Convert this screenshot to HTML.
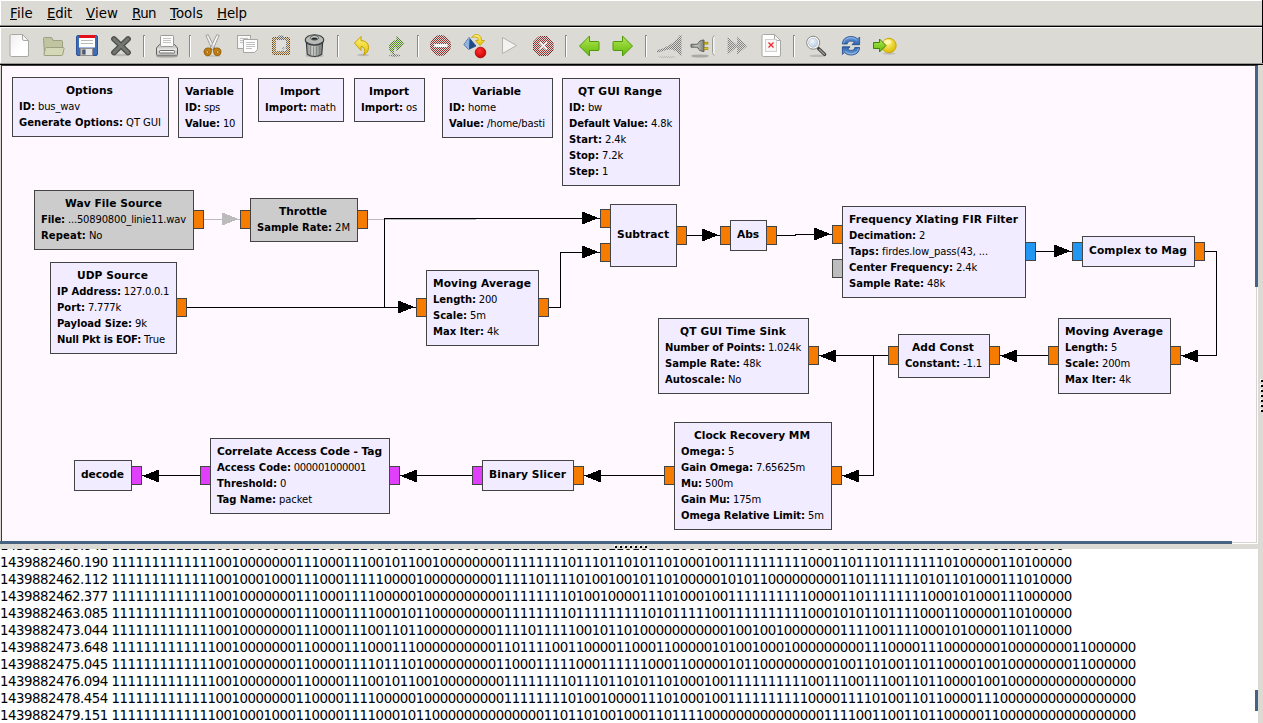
<!DOCTYPE html>
<html><head><meta charset="utf-8"><title>bus_wav.grc - GNU Radio Companion</title>
<style>
html,body{margin:0;padding:0}
body{width:1263px;height:723px;overflow:hidden;background:#dcdad5;position:relative;font-family:"DejaVu Sans","Liberation Sans",sans-serif;color:#000}
.abs{position:absolute}
#menubar{position:absolute;left:0;top:0;width:1263px;height:25px;background:#dcdad5;border-top:1px solid #fff;box-sizing:border-box}
#menubar .mi{position:absolute;top:5px;font-size:13.333px;line-height:16px;white-space:nowrap}
#menubar u{text-decoration:underline;text-underline-offset:1px}
#canvas{position:absolute;left:2px;top:66px;width:1253px;height:475px;background:#FFF9FF;overflow:hidden}
#cv{position:absolute;left:-2px;top:-66px;width:1263px;height:723px}
.blk{position:absolute;background:#F1ECFF;border:1px solid #444;white-space:nowrap}
.blk.dis{background:#CCCCCC}
.blk .t{position:absolute;font-size:10.667px;line-height:13px;height:13px;white-space:pre}
.blk .p{position:absolute;left:6px;font-size:10px;line-height:13px;height:13px;white-space:pre}
.port{position:absolute;width:9px;height:17px;border:1px solid #444}
#console{position:absolute;left:0;top:549px;width:1258px;height:174px;background:#fff;overflow:hidden}
.ln{position:absolute;left:0px;font-size:13.333px;line-height:17px;height:17px;white-space:pre;letter-spacing:-0.4775px}
</style></head><body>
<div id="menubar">
<div class="mi" style="left:10px"><span id="s1" style="letter-spacing:0.172px;"><u>F</u>ile</span></div><div class="mi" style="left:47px"><span id="s2" style="letter-spacing:-0.203px;"><u>E</u>dit</span></div><div class="mi" style="left:86px"><span id="s3" style="letter-spacing:0.090px;"><u>V</u>iew</span></div><div class="mi" style="left:132px"><span id="s4" style="letter-spacing:-0.526px;"><u>R</u>un</span></div><div class="mi" style="left:170px"><span id="s5" style="letter-spacing:0.028px;"><u>T</u>ools</span></div><div class="mi" style="left:217px"><span id="s6" style="letter-spacing:-0.102px;"><u>H</u>elp</span></div>
</div>
<div class="abs" style="left:0;top:25px;width:1263px;height:1px;background:#8b8985"></div>
<div class="abs" style="left:0;top:26px;width:1263px;height:1px;background:#000"></div>
<div class="abs" style="left:0;top:27px;width:1263px;height:1px;background:#fff"></div>
<div class="abs" style="left:0;top:28px;width:1px;height:36px;background:#fff"></div>
<div class="abs" style="left:0;top:1px;width:1px;height:24px;background:#fff"></div>
<div class="abs" style="left:1262px;top:0;width:1px;height:65px;background:#000"></div>
<div class="abs" style="left:0;top:63px;width:1263px;height:1px;background:#9d9b97"></div>
<div class="abs" style="left:0;top:64px;width:1263px;height:1px;background:#000"></div>
<div class="abs" style="left:1px;top:65px;width:1257px;height:1px;background:#3a3a3a"></div>
<div class="abs" style="left:1px;top:65px;width:1px;height:476px;background:#3a3a3a"></div>
<svg class="abs" style="left:0;top:28px" width="1263" height="36" viewBox="0 28 1263 36">
<defs>
<linearGradient id="gpage" x1="0" y1="0" x2="1" y2="1"><stop offset="0" stop-color="#eeeeee"/><stop offset="0.6" stop-color="#ffffff"/></linearGradient>
<linearGradient id="ggreen" x1="0" y1="0" x2="0" y2="1"><stop offset="0" stop-color="#b4e85c"/><stop offset="0.5" stop-color="#8ad02c"/><stop offset="1" stop-color="#66b814"/></linearGradient>
<linearGradient id="gyel" x1="0" y1="0" x2="0" y2="1"><stop offset="0" stop-color="#fff27a"/><stop offset="1" stop-color="#e3c200"/></linearGradient>
<linearGradient id="gblue" x1="0" y1="0" x2="0" y2="1"><stop offset="0" stop-color="#6ea0dc"/><stop offset="1" stop-color="#2f62ae"/></linearGradient>
<linearGradient id="gcan" x1="0" y1="0" x2="1" y2="0"><stop offset="0" stop-color="#8d8f8b"/><stop offset="0.4" stop-color="#c9cbc7"/><stop offset="1" stop-color="#7a7c78"/></linearGradient>
<radialGradient id="gball" cx="0.4" cy="0.3" r="0.7"><stop offset="0" stop-color="#fff68a"/><stop offset="1" stop-color="#dcbc00"/></radialGradient>
<radialGradient id="gred" cx="0.4" cy="0.35" r="0.7"><stop offset="0" stop-color="#ff3030"/><stop offset="1" stop-color="#cc0000"/></radialGradient>
<radialGradient id="glens" cx="0.4" cy="0.35" r="0.7"><stop offset="0" stop-color="#f4f8fc"/><stop offset="1" stop-color="#b4c8e0"/></radialGradient>
<pattern id="stip" width="2" height="2" patternUnits="userSpaceOnUse"><rect x="0" y="0" width="1" height="1" fill="#fff"/><rect x="1" y="1" width="1" height="1" fill="#fff"/></pattern>
<mask id="mstip" maskUnits="userSpaceOnUse" x="0" y="28" width="1263" height="36"><rect x="0" y="28" width="1263" height="36" fill="url(#stip)"/></mask>
</defs>
<!-- separators -->
<g shape-rendering="crispEdges">
<rect x="143" y="35" width="1" height="22" fill="#8e8a83"/><rect x="144" y="35" width="1" height="1" fill="#8e8a83"/><rect x="144" y="36" width="1" height="21" fill="#fff"/>
<rect x="189" y="35" width="1" height="22" fill="#8e8a83"/><rect x="190" y="35" width="1" height="1" fill="#8e8a83"/><rect x="190" y="36" width="1" height="21" fill="#fff"/>
<rect x="337" y="35" width="1" height="22" fill="#8e8a83"/><rect x="338" y="35" width="1" height="1" fill="#8e8a83"/><rect x="338" y="36" width="1" height="21" fill="#fff"/>
<rect x="417" y="35" width="1" height="22" fill="#8e8a83"/><rect x="418" y="35" width="1" height="1" fill="#8e8a83"/><rect x="418" y="36" width="1" height="21" fill="#fff"/>
<rect x="565" y="35" width="1" height="22" fill="#8e8a83"/><rect x="566" y="35" width="1" height="1" fill="#8e8a83"/><rect x="566" y="36" width="1" height="21" fill="#fff"/>
<rect x="645" y="35" width="1" height="22" fill="#8e8a83"/><rect x="646" y="35" width="1" height="1" fill="#8e8a83"/><rect x="646" y="36" width="1" height="21" fill="#fff"/>
<rect x="793" y="35" width="1" height="22" fill="#8e8a83"/><rect x="794" y="35" width="1" height="1" fill="#8e8a83"/><rect x="794" y="36" width="1" height="21" fill="#fff"/>
</g>
<!-- new -->
<path d="M11.5 34.5 h11 l6 6 v14.5 q0 1.5 -1.5 1.5 h-15.5 q-1.5 0 -1.5 -1.5 v-19 q0 -1.5 1.5 -1.5z" fill="url(#gpage)" stroke="#a8a8a4"/>
<path d="M22.5 34.5 v4.5 q0 1.5 1.5 1.5 h4.5z" fill="#f4f4f4" stroke="#a8a8a4" stroke-linejoin="round"/>
<!-- open -->
<path d="M43.500 38.500 q0 -1 1 -1 h6.500 q1 0 1.300 1 l0.700 2 h8.500 q1 0 1 1 v13 h-18z" fill="#c1c4a0" stroke="#9c9f80"/>
<path d="M46.800 47.500 h16.500 q1 0 0.800 1 l-1.400 6 q-0.200 1 -1.200 1 h-16.800 q-1 0 -0.800 -1 l1.400 -6 q0.300 -1 1.500 -1z" fill="#d5d8b6" stroke="#9c9f80"/>
<!-- save -->
<rect x="76.500" y="35.500" width="21" height="20" rx="1.500" fill="#3e6cb6" stroke="#2c5496"/>
<rect x="79" y="35" width="16" height="12.500" fill="#fff"/>
<rect x="79" y="35" width="16" height="3" fill="#e3101a"/>
<rect x="81" y="40" width="12" height="1" fill="#b9b9b9"/><rect x="81" y="43" width="12" height="1" fill="#b9b9b9"/>
<rect x="80.500" y="48.500" width="12" height="7" fill="#e4e4e4" stroke="#8e8e8e"/>
<rect x="81" y="49" width="5" height="6" fill="#c4c4c4"/>
<rect x="82.800" y="50" width="2.200" height="4" fill="#3e6cb6" stroke="#3a3a3a" stroke-width="0.700"/>
<!-- close X -->
<ellipse cx="121" cy="55" rx="8" ry="1.300" fill="#000" opacity="0.150"/>
<g stroke-linecap="round" fill="none">
<path d="M114 39 L128 52.500 M128 39 L114 52.500" stroke="#50524e" stroke-width="5.800"/>
<path d="M114 39 L128 52.500 M128 39 L114 52.500" stroke="#747671" stroke-width="3"/>
</g>
<!-- print -->
<ellipse cx="167" cy="56.500" rx="11" ry="1.300" fill="#000" opacity="0.180"/>
<path d="M159.500 44.500 h15 l3 3.500 v6.500 q0 1.200 -1.200 1.200 h-18.600 q-1.200 0 -1.200 -1.200 v-6.500z" fill="#cfcfcd" stroke="#5f615d"/>
<path d="M157 48.500 h20 v2 h-20z" fill="#e6e6e4"/>
<rect x="160.500" y="35.500" width="13" height="11" rx="0.800" fill="#fbfbfb" stroke="#9a9a98"/>
<rect x="163" y="38" width="8" height="1" fill="#c4c4c4"/><rect x="163" y="40" width="8" height="1" fill="#c4c4c4"/><rect x="163" y="42" width="8" height="1" fill="#c4c4c4"/>
<rect x="159.500" y="50.500" width="15" height="2.500" rx="0.800" fill="#fafafa" stroke="#5f615d" stroke-width="0.900"/>
<path d="M157 55 h20" stroke="#9b9d99" stroke-width="0.800"/>
<!-- cut -->
<ellipse cx="213" cy="56" rx="8" ry="1" fill="#000" opacity="0.100"/>
<path d="M205.900 35.500 L208.200 34.700 L214.800 48.300 L212.200 49.800 Z" fill="#eeefec" stroke="#8f918d" stroke-width="0.800"/>
<path d="M219.100 35.500 L216.800 34.700 L210.200 48.300 L212.800 49.800 Z" fill="#f6f7f5" stroke="#8f918d" stroke-width="0.800"/>
<circle cx="212.500" cy="46.700" r="0.900" fill="#fff" stroke="#888a85" stroke-width="0.500"/>
<g fill="#c47f12" stroke="#8f5902" stroke-width="0.900">
<path d="M211.300 48.600 q-2.800 -1.200 -5.300 -0.300 q-2.200 1 -2 3.700 q0.300 3.500 3.400 3.700 q3.300 0 3.800 -3 z"/>
<path d="M213.700 48.600 q2.800 -1.200 5.300 -0.300 q2.200 1 2 3.700 q-0.300 3.500 -3.400 3.700 q-3.300 0 -3.800 -3 z"/>
</g>
<ellipse cx="207.300" cy="52" rx="1.200" ry="1.700" fill="#e3b76a" stroke="#8f5902" stroke-width="0.600" transform="rotate(-15 207.3 52)"/>
<ellipse cx="217.700" cy="52" rx="1.200" ry="1.700" fill="#e3b76a" stroke="#8f5902" stroke-width="0.600" transform="rotate(15 217.7 52)"/>
<!-- copy -->
<rect x="237.500" y="35.500" width="13" height="13" fill="#f7f7f7" stroke="#a6a6a3"/>
<rect x="240" y="38" width="8" height="1" fill="#c0c0c0"/><rect x="240" y="40" width="8" height="1" fill="#c0c0c0"/><rect x="240" y="42" width="4" height="1" fill="#c0c0c0"/>
<path d="M243.500 39.500 h14 v10 l-3 3 h-11z" fill="#fff" stroke="#a6a6a3"/>
<rect x="246" y="42" width="9" height="1" fill="#c0c0c0"/><rect x="246" y="44" width="9" height="1" fill="#c0c0c0"/><rect x="246" y="46" width="9" height="1" fill="#c0c0c0"/><rect x="246" y="48" width="6" height="1" fill="#c0c0c0"/>
<!-- paste (insensitive) -->
<g mask="url(#mstip)">
<rect x="272.500" y="37.500" width="17" height="17" rx="1" fill="#9a6a26" stroke="#5e4117"/>
<rect x="275.500" y="39.500" width="11" height="12" fill="#e2e2e2" stroke="#6f6f6f"/>
<path d="M277 38.500 l2 -3 h4 l2 3 v1.500 h-8z" fill="#666"/>
<path d="M282 51 v-4 h4z" fill="#999"/>
</g>
<!-- delete (trash) -->
<ellipse cx="314.500" cy="55.800" rx="9.500" ry="1.600" fill="#000" opacity="0.150"/>
<path d="M306.300 42 l0.900 12.200 q3.500 2.300 7.300 2.300 q3.800 0 7.300 -2.300 l0.900 -12.200z" fill="url(#gcan)" stroke="#353b3c" stroke-width="1.100"/>
<path d="M310.500 46 v9.500 M313.500 46.500 v10 M316.500 46.500 v10 M319.500 46 v9" stroke="#767874" stroke-width="0.900" opacity="0.800"/>
<ellipse cx="314.500" cy="40" rx="9.300" ry="5.300" fill="#b9bbb7" stroke="#353b3c" stroke-width="1.100"/>
<path d="M305.500 41.500 q9 6.500 18 0" fill="none" stroke="#353b3c" stroke-width="0.800"/>
<ellipse cx="314.500" cy="37.800" rx="4" ry="2.300" fill="#d4d6d2" stroke="#353b3c" stroke-width="0.800"/>
<ellipse cx="314.500" cy="38.600" rx="2.800" ry="1.200" fill="#23272a"/>
<!-- undo -->
<ellipse cx="363" cy="55" rx="6" ry="1.200" fill="#000" opacity="0.150"/>
<path d="M354.500 43 l6.500 -6.500 v4 q7.500 0.500 7.500 7 q0 5 -5 7.500 q2 -3.500 1 -6 q-1 -2.500 -3.500 -2.500 v4z" fill="url(#gyel)" stroke="#c4a000" stroke-linejoin="round"/>
<!-- redo insensitive -->
<g mask="url(#mstip)">
<path d="M403.500 43 l-6.500 -6.500 v4 q-7.500 0.500 -7.500 7 q0 5 5 7.500 q-2 -3.500 -1 -6 q1 -2.500 3.500 -2.500 v4z" fill="#4f8f1b" stroke="#3b7010" stroke-linejoin="round"/>
<ellipse cx="395" cy="55.500" rx="6" ry="1.200" fill="#777"/>
</g>
<!-- errors (insensitive) -->
<g mask="url(#mstip)">
<circle cx="440.500" cy="45.500" r="10" fill="#9a3232" stroke="#6e2020"/>
<rect x="434" y="44" width="13.500" height="3" rx="1" fill="#fff"/>
</g>
<rect x="434" y="44" width="13.500" height="3" rx="1" fill="#fff" opacity="0.550"/>
<!-- generate (convert) -->
<path d="M469 37.500 l-5 7 l4.500 5 l7.500 -3.500z" fill="#204a87" stroke="#204a87" stroke-width="0.800" stroke-linejoin="round"/>
<path d="M469 37.500 l-0.500 12" stroke="#c8dcf4" stroke-width="0.800" fill="none"/>
<path d="M464 44.500 l4.500 5 l0.500 -12z" fill="#8fb5e3"/>
<path d="M471.500 37.500 q4 -5 8 -2 q2.500 2 2 5 h3 l-4.500 5 l-4.500 -5 h2.800 q0.500 -3.500 -3 -3.500 q-2 0 -3.800 0.500z" fill="url(#gyel)" stroke="#c4a000" stroke-width="0.800" stroke-linejoin="round"/>
<circle cx="480.500" cy="52.500" r="5.300" fill="url(#gred)" stroke="#a40000" stroke-width="0.800"/>
<!-- play (insensitive look) -->
<path d="M502.500 37.500 v16 l14 -8z" fill="#f3f3f1" stroke="#b3b3ae" stroke-linejoin="round"/>
<!-- stop (insensitive) -->
<g mask="url(#mstip)">
<path d="M539 36.500 h8.500 l5.500 5.500 v8 l-5.500 5.500 h-8.500 l-5.500 -5.500 v-8z" fill="#9a3232" stroke="#6e2020"/>
<path d="M539.500 42 l7.500 7.500 M547 42 l-7.500 7.500" stroke="#fff" stroke-width="2"/>
</g>
<path d="M539.500 42 l7.500 7.500 M547 42 l-7.500 7.500" stroke="#fff" stroke-width="1.400" opacity="0.250"/>
<!-- back -->
<path d="M579.500 46 l10 -10 v5.500 h8.500 q1 0 1 1 v7 q0 1 -1 1 h-8.500 v5.500z" fill="url(#ggreen)" stroke="#4e9a06" stroke-linejoin="round"/>
<!-- forward -->
<path d="M632.500 46 l-10 -10 v5.500 h-8.500 q-1 0 -1 1 v7 q0 1 1 1 h8.500 v5.500z" fill="url(#ggreen)" stroke="#4e9a06" stroke-linejoin="round"/>
<!-- disconnect (insensitive) -->
<g mask="url(#mstip)">
<path d="M657 50 C661 49 665 47.500 668 46 C672 44 677 39 680 35 L681.500 35 L681.500 55.500 L680 55.500 C678 52 674 49.500 670 49.500 C665 50 661 52 657 52.500 Z" fill="#7e7e7e"/>
<ellipse cx="667" cy="57" rx="9" ry="1" fill="#b8b8b8"/>
</g>
<!-- connect (plug) -->
<ellipse cx="700" cy="56" rx="9" ry="1.600" fill="#000" opacity="0.220"/>
<path d="M691 44.300 h6.500 q1.500 -4.300 6.500 -4.300 v11.500 q-5 0 -6.500 -4.300 h-6.500z" fill="url(#gcan)" stroke="#555753" stroke-width="0.900"/>
<rect x="704.500" y="42.200" width="3.500" height="1.900" fill="#e0c000" stroke="#8f7a00" stroke-width="0.600"/>
<rect x="704.500" y="47.700" width="3.500" height="1.900" fill="#e0c000" stroke="#8f7a00" stroke-width="0.600"/>
<path d="M714.500 35.500 q-2.500 1 -2.500 3 v14 q0 2 2.500 3z" fill="#f4f4f2"/>
<path d="M714.500 35.500 q-2 1 -2 3 v14 q0 2 2 3" fill="none" stroke="#8e8e8a" stroke-width="0.900"/>
<!-- fast-forward (insensitive) -->
<g mask="url(#mstip)">
<path d="M728 37.500 v16.500 l9.500 -8.200z M737.500 37.500 v16.500 l9.500 -8.200z" fill="#888" stroke="#777" stroke-width="0.600"/>
</g>
<!-- missing image -->
<path d="M763.500 34.500 h11 l6 6 v14.500 q0 1.500 -1.500 1.500 h-15.500 q-1.500 0 -1.500 -1.500 v-19 q0 -1.500 1.500 -1.500z" fill="#fff" stroke="#a8a8a4"/>
<path d="M774.500 34.500 v4.500 q0 1.500 1.500 1.500 h4.500z" fill="#f4f4f4" stroke="#a8a8a4" stroke-linejoin="round"/>
<rect x="765.500" y="39.500" width="11" height="12" fill="#f6f6f6" stroke="#d0d0cc"/>
<path d="M768.500 42.500 l5 5 M773.500 42.500 l-5 5" stroke="#ef2929" stroke-width="1.300"/>
<!-- find (magnifier) -->
<ellipse cx="817" cy="55.800" rx="8" ry="1.300" fill="#000" opacity="0.140"/>
<path d="M818.600 48.600 l6 5.800" stroke="#3c3e3a" stroke-width="3.400" stroke-linecap="round"/>
<path d="M819.200 49.300 l5.200 5" stroke="#a3a5a1" stroke-width="1.200" stroke-linecap="round"/>
<circle cx="813.200" cy="42.700" r="6.500" fill="#fff" stroke="#858783" stroke-width="1"/>
<circle cx="813.200" cy="42.700" r="4.700" fill="url(#glens)" stroke="#b9bdc2" stroke-width="0.600"/>
<!-- refresh -->
<g>
<path d="M842.400 44 C842.600 39.300 846 36.500 851 36.500 C853.800 36.500 856 37.400 857.600 39 L859.600 37 L859.600 44.700 L851.900 44.700 L854.300 42.300 C853.400 41.500 852.300 41.100 851 41.100 C848.800 41.100 847.500 42.300 847.200 44 Z" fill="url(#gblue)" stroke="#204a87" stroke-width="0.800" stroke-linejoin="round"/>
<path d="M843.600 43.200 C844.200 39.800 847 37.700 851 37.700 C853.300 37.700 855.200 38.600 856.800 40.200" stroke="#a9c8ee" stroke-width="0.900" fill="none" opacity="0.800"/>
</g>
<g transform="rotate(180 851 45.750)">
<path d="M842.400 44 C842.600 39.300 846 36.500 851 36.500 C853.800 36.500 856 37.400 857.600 39 L859.600 37 L859.600 44.700 L851.900 44.700 L854.300 42.300 C853.400 41.500 852.300 41.100 851 41.100 C848.800 41.100 847.500 42.300 847.200 44 Z" fill="url(#gblue)" stroke="#204a87" stroke-width="0.800" stroke-linejoin="round"/>
<path d="M843.600 43.200 C844.200 39.800 847 37.700 851 37.700 C853.300 37.700 855.200 38.600 856.800 40.200" stroke="#a9c8ee" stroke-width="0.900" fill="none" opacity="0.800"/>
</g>
<!-- jump to -->
<ellipse cx="889" cy="53.500" rx="6.500" ry="1.200" fill="#000" opacity="0.140"/>
<circle cx="889" cy="45.500" r="7.200" fill="url(#gball)" stroke="#c4a000" stroke-width="0.900"/>
<ellipse cx="887.500" cy="42" rx="3.800" ry="2.300" fill="#fffbc0" opacity="0.700"/>
<path d="M873.500 42.500 h6 v-3.500 l6.500 6.500 l-6.500 6.500 v-3.500 h-6z" fill="url(#ggreen)" stroke="#3f8204" stroke-linejoin="round"/>

</svg>
<div id="canvas"><div id="cv">
<svg class="abs" style="left:0;top:0" width="1263" height="723" shape-rendering="crispEdges">
<polyline points="204,219.5 240,219.5" fill="none" stroke="#bbb" stroke-width="1"/>
<polygon points="222,213 223.5,213 238.5,219 223.5,225 222,225" fill="#bbb"/>
<polyline points="368,219.5 476,219.5" fill="none" stroke="#bbb" stroke-width="1"/>
<polyline points="187,307.5 416,307.5" fill="none" stroke="#000" stroke-width="1"/>
<polygon points="398,301 399.5,301 414.5,307 399.5,313 398,313" fill="#000"/>
<polyline points="384.5,307.5 384.5,218.5 600,218.5" fill="none" stroke="#000" stroke-width="1"/>
<polygon points="582,212 583.5,212 598.5,218 583.5,224 582,224" fill="#000"/>
<polyline points="549,307.5 560.5,307.5 560.5,252.5 600,252.5" fill="none" stroke="#000" stroke-width="1"/>
<polygon points="582,246 583.5,246 598.5,252 583.5,258 582,258" fill="#000"/>
<polyline points="687,235.5 720,235.5" fill="none" stroke="#000" stroke-width="1"/>
<polygon points="702,229 703.5,229 718.5,235 703.5,241 702,241" fill="#000"/>
<polyline points="777,235.5 795.5,235.5 795.5,234.5 832,234.5" fill="none" stroke="#000" stroke-width="1"/>
<polygon points="814,228 815.5,228 830.5,234 815.5,240 814,240" fill="#000"/>
<polyline points="1036,251.5 1072,251.5" fill="none" stroke="#000" stroke-width="1"/>
<polygon points="1054,245 1055.5,245 1070.5,251 1055.5,257 1054,257" fill="#000"/>
<polyline points="1205,251.5 1216.5,251.5 1216.5,355.5 1181,355.5" fill="none" stroke="#000" stroke-width="1"/>
<polygon points="1198,350 1196.5,350 1181.5,356 1196.5,362 1198,362" fill="#000"/>
<polyline points="1048,355.5 1000,355.5" fill="none" stroke="#000" stroke-width="1"/>
<polygon points="1017,350 1015.5,350 1000.5,356 1015.5,362 1017,362" fill="#000"/>
<polyline points="888,355.5 819,355.5" fill="none" stroke="#000" stroke-width="1"/>
<polygon points="836,350 834.5,350 819.5,356 834.5,362 836,362" fill="#000"/>
<polyline points="873.5,355.5 873.5,475.5 842,475.5" fill="none" stroke="#000" stroke-width="1"/>
<polygon points="859,470 857.5,470 842.5,476 857.5,482 859,482" fill="#000"/>
<polyline points="664,475.5 584,475.5" fill="none" stroke="#000" stroke-width="1"/>
<polygon points="601,470 599.5,470 584.5,476 599.5,482 601,482" fill="#000"/>
<polyline points="472,475.5 400,475.5" fill="none" stroke="#000" stroke-width="1"/>
<polygon points="417,470 415.5,470 400.5,476 415.5,482 417,482" fill="#000"/>
<polyline points="200,475.5 142,475.5" fill="none" stroke="#000" stroke-width="1"/>
<polygon points="159,470 157.5,470 142.5,476 157.5,482 159,482" fill="#000"/>
</svg>
<div class="blk" style="left:12px;top:77px;width:155px;height:58px"><div class="t" style="top:6px;left:53px"><span id="s7" style="font-weight:bold;letter-spacing:0.045px;">Options</span></div><div class="p" style="top:22px"><span id="s8" style="font-weight:bold;letter-spacing:-0.010px;">ID:</span><span id="s9" style="letter-spacing:-0.164px;"> bus_wav</span></div><div class="p" style="top:38px"><span id="s10" style="font-weight:bold;letter-spacing:0.033px;">Generate Options:</span><span id="s11" style="letter-spacing:-0.051px;"> QT GUI</span></div></div><div class="blk" style="left:178px;top:78px;width:63px;height:58px"><div class="t" style="top:6px;left:6px"><span id="s12" style="font-weight:bold;letter-spacing:-0.059px;">Variable</span></div><div class="p" style="top:22px"><span id="s13" style="font-weight:bold;letter-spacing:-0.010px;">ID:</span><span id="s14" style="letter-spacing:-0.238px;"> sps</span></div><div class="p" style="top:38px"><span id="s15" style="font-weight:bold;letter-spacing:-0.047px;">Value:</span><span id="s16" style="letter-spacing:-0.302px;"> 10</span></div></div><div class="blk" style="left:258px;top:78px;width:84px;height:42px"><div class="t" style="top:6px;left:21px"><span id="s17" style="font-weight:bold;letter-spacing:-0.062px;">Import</span></div><div class="p" style="top:22px"><span id="s18" style="font-weight:bold;letter-spacing:0.016px;">Import:</span><span id="s19" style="letter-spacing:-0.062px;"> math</span></div></div><div class="blk" style="left:354px;top:78px;width:69px;height:42px"><div class="t" style="top:6px;left:14px"><span id="s20" style="font-weight:bold;letter-spacing:-0.062px;">Import</span></div><div class="p" style="top:22px"><span id="s21" style="font-weight:bold;letter-spacing:0.016px;">Import:</span><span id="s22" style="letter-spacing:-0.172px;"> os</span></div></div><div class="blk" style="left:442px;top:78px;width:109px;height:58px"><div class="t" style="top:6px;left:29px"><span id="s23" style="font-weight:bold;letter-spacing:-0.059px;">Variable</span></div><div class="p" style="top:22px"><span id="s24" style="font-weight:bold;letter-spacing:-0.010px;">ID:</span><span id="s25" style="letter-spacing:-0.106px;"> home</span></div><div class="p" style="top:38px"><span id="s26" style="font-weight:bold;letter-spacing:-0.047px;">Value:</span><span id="s27" style="letter-spacing:-0.138px;"> /home/basti</span></div></div><div class="blk" style="left:562px;top:78px;width:116px;height:106px"><div class="t" style="top:6px;left:15px"><span id="s28" style="font-weight:bold;letter-spacing:0.087px;">QT GUI Range</span></div><div class="p" style="top:22px"><span id="s29" style="font-weight:bold;letter-spacing:-0.010px;">ID:</span><span id="s30" style="letter-spacing:-0.240px;"> bw</span></div><div class="p" style="top:38px"><span id="s31" style="font-weight:bold;letter-spacing:-0.090px;">Default Value:</span><span id="s32" style="letter-spacing:-0.175px;"> 4.8k</span></div><div class="p" style="top:54px"><span id="s33" style="font-weight:bold;letter-spacing:0.091px;">Start:</span><span id="s34" style="letter-spacing:-0.175px;"> 2.4k</span></div><div class="p" style="top:70px"><span id="s35" style="font-weight:bold;letter-spacing:-0.003px;">Stop:</span><span id="s36" style="letter-spacing:-0.175px;"> 7.2k</span></div><div class="p" style="top:86px"><span id="s37" style="font-weight:bold;letter-spacing:0.016px;">Step:</span><span id="s38" style="letter-spacing:-0.273px;"> 1</span></div></div><div class="blk dis" style="left:34px;top:190px;width:158px;height:58px"><div class="t" style="top:6px;left:30px"><span id="s39" style="font-weight:bold;letter-spacing:0.058px;">Wav File Source</span></div><div class="p" style="top:22px"><span id="s40" style="font-weight:bold;letter-spacing:-0.094px;">File:</span><span id="s41" style="letter-spacing:-0.191px;"> ...50890800_linie11.wav</span></div><div class="p" style="top:38px"><span id="s42" style="font-weight:bold;letter-spacing:0.150px;">Repeat:</span><span id="s43" style="letter-spacing:-0.260px;"> No</span></div></div><div class="blk dis" style="left:250px;top:198px;width:106px;height:42px"><div class="t" style="top:6px;left:28px"><span id="s44" style="font-weight:bold;letter-spacing:-0.062px;">Throttle</span></div><div class="p" style="top:22px"><span id="s45" style="font-weight:bold;letter-spacing:-0.020px;">Sample Rate:</span><span id="s46" style="letter-spacing:-0.057px;"> 2M</span></div></div><div class="blk" style="left:50px;top:262px;width:125px;height:90px"><div class="t" style="top:6px;left:26px"><span id="s47" style="font-weight:bold;letter-spacing:0.059px;">UDP Source</span></div><div class="p" style="top:22px"><span id="s48" style="font-weight:bold;letter-spacing:-0.020px;">IP Address:</span><span id="s49" style="letter-spacing:-0.289px;"> 127.0.0.1</span></div><div class="p" style="top:38px"><span id="s50" style="font-weight:bold;letter-spacing:0.016px;">Port:</span><span id="s51" style="letter-spacing:-0.230px;"> 7.777k</span></div><div class="p" style="top:54px"><span id="s52" style="font-weight:bold;letter-spacing:0.005px;">Payload Size:</span><span id="s53" style="letter-spacing:-0.115px;"> 9k</span></div><div class="p" style="top:70px"><span id="s54" style="font-weight:bold;letter-spacing:-0.159px;">Null Pkt is EOF:</span><span id="s55" style="letter-spacing:-0.084px;"> True</span></div></div><div class="blk" style="left:426px;top:270px;width:111px;height:74px"><div class="t" style="top:6px;left:6px"><span id="s56" style="font-weight:bold;letter-spacing:0.086px;">Moving Average</span></div><div class="p" style="top:22px"><span id="s57" style="font-weight:bold;letter-spacing:-0.049px;">Length:</span><span id="s58" style="letter-spacing:-0.316px;"> 200</span></div><div class="p" style="top:38px"><span id="s59" style="font-weight:bold;letter-spacing:-0.016px;">Scale:</span><span id="s60" style="letter-spacing:-0.099px;"> 5m</span></div><div class="p" style="top:54px"><span id="s61" style="font-weight:bold;letter-spacing:0.016px;">Max Iter:</span><span id="s62" style="letter-spacing:-0.115px;"> 4k</span></div></div><div class="blk" style="left:610px;top:204px;width:65px;height:61px"><div class="t" style="top:23px;left:6px"><span id="s63" style="font-weight:bold;letter-spacing:0.020px;">Subtract</span></div></div><div class="blk" style="left:730px;top:220px;width:35px;height:29px"><div class="t" style="top:7px;left:6px"><span id="s64" style="font-weight:bold;letter-spacing:-0.073px;">Abs</span></div></div><div class="blk" style="left:842px;top:206px;width:182px;height:90px"><div class="t" style="top:6px;left:6px"><span id="s65" style="font-weight:bold;letter-spacing:0.031px;">Frequency Xlating FIR Filter</span></div><div class="p" style="top:22px"><span id="s66" style="font-weight:bold;letter-spacing:-0.074px;">Decimation:</span><span id="s67" style="letter-spacing:-0.273px;"> 2</span></div><div class="p" style="top:38px"><span id="s68" style="font-weight:bold;letter-spacing:0.122px;">Taps:</span><span id="s69" style="letter-spacing:-0.117px;"> firdes.low_pass(43, ...</span></div><div class="p" style="top:54px"><span id="s70" style="font-weight:bold;letter-spacing:0.015px;">Center Frequency:</span><span id="s71" style="letter-spacing:-0.175px;"> 2.4k</span></div><div class="p" style="top:70px"><span id="s72" style="font-weight:bold;letter-spacing:-0.020px;">Sample Rate:</span><span id="s73" style="letter-spacing:-0.176px;"> 48k</span></div></div><div class="blk" style="left:1082px;top:236px;width:111px;height:29px"><div class="t" style="top:7px;left:6px"><span id="s74" style="font-weight:bold;letter-spacing:0.079px;">Complex to Mag</span></div></div><div class="blk" style="left:1058px;top:318px;width:111px;height:74px"><div class="t" style="top:6px;left:6px"><span id="s75" style="font-weight:bold;letter-spacing:0.086px;">Moving Average</span></div><div class="p" style="top:22px"><span id="s76" style="font-weight:bold;letter-spacing:-0.049px;">Length:</span><span id="s77" style="letter-spacing:-0.273px;"> 5</span></div><div class="p" style="top:38px"><span id="s78" style="font-weight:bold;letter-spacing:-0.016px;">Scale:</span><span id="s79" style="letter-spacing:-0.203px;"> 200m</span></div><div class="p" style="top:54px"><span id="s80" style="font-weight:bold;letter-spacing:0.016px;">Max Iter:</span><span id="s81" style="letter-spacing:-0.115px;"> 4k</span></div></div><div class="blk" style="left:898px;top:334px;width:90px;height:42px"><div class="t" style="top:6px;left:13px"><span id="s82" style="font-weight:bold;letter-spacing:0.068px;">Add Const</span></div><div class="p" style="top:22px"><span id="s83" style="font-weight:bold;letter-spacing:0.031px;">Constant:</span><span id="s84" style="letter-spacing:-0.141px;"> -1.1</span></div></div><div class="blk" style="left:658px;top:318px;width:149px;height:74px"><div class="t" style="top:6px;left:21px"><span id="s85" style="font-weight:bold;letter-spacing:0.120px;">QT GUI Time Sink</span></div><div class="p" style="top:22px"><span id="s86" style="font-weight:bold;letter-spacing:-0.144px;">Number of Points:</span><span id="s87" style="letter-spacing:-0.230px;"> 1.024k</span></div><div class="p" style="top:38px"><span id="s88" style="font-weight:bold;letter-spacing:-0.020px;">Sample Rate:</span><span id="s89" style="letter-spacing:-0.176px;"> 48k</span></div><div class="p" style="top:54px"><span id="s90" style="font-weight:bold;letter-spacing:0.064px;">Autoscale:</span><span id="s91" style="letter-spacing:-0.260px;"> No</span></div></div><div class="blk" style="left:674px;top:422px;width:156px;height:106px"><div class="t" style="top:6px;left:19px"><span id="s92" style="font-weight:bold;letter-spacing:-0.017px;">Clock Recovery MM</span></div><div class="p" style="top:22px"><span id="s93" style="font-weight:bold;letter-spacing:0.065px;">Omega:</span><span id="s94" style="letter-spacing:-0.273px;"> 5</span></div><div class="p" style="top:38px"><span id="s95" style="font-weight:bold;letter-spacing:-0.054px;">Gain Omega:</span><span id="s96" style="letter-spacing:-0.253px;"> 7.65625m</span></div><div class="p" style="top:54px"><span id="s97" style="font-weight:bold;letter-spacing:-0.026px;">Mu:</span><span id="s98" style="letter-spacing:-0.203px;"> 500m</span></div><div class="p" style="top:70px"><span id="s99" style="font-weight:bold;letter-spacing:-0.133px;">Gain Mu:</span><span id="s100" style="letter-spacing:-0.203px;"> 175m</span></div><div class="p" style="top:86px"><span id="s101" style="font-weight:bold;letter-spacing:-0.056px;">Omega Relative Limit:</span><span id="s102" style="letter-spacing:-0.099px;"> 5m</span></div></div><div class="blk" style="left:482px;top:460px;width:90px;height:29px"><div class="t" style="top:7px;left:6px"><span id="s103" style="font-weight:bold;letter-spacing:0.058px;">Binary Slicer</span></div></div><div class="blk" style="left:210px;top:438px;width:178px;height:74px"><div class="t" style="top:6px;left:6px"><span id="s104" style="font-weight:bold;letter-spacing:-0.067px;">Correlate Access Code - Tag</span></div><div class="p" style="top:22px"><span id="s105" style="font-weight:bold;letter-spacing:0.007px;">Access Code:</span><span id="s106" style="letter-spacing:-0.349px;"> 000001000001</span></div><div class="p" style="top:38px"><span id="s107" style="font-weight:bold;letter-spacing:-0.019px;">Threshold:</span><span id="s108" style="letter-spacing:-0.273px;"> 0</span></div><div class="p" style="top:54px"><span id="s109" style="font-weight:bold;letter-spacing:-0.028px;">Tag Name:</span><span id="s110" style="letter-spacing:-0.096px;"> packet</span></div></div><div class="blk" style="left:74px;top:460px;width:56px;height:29px"><div class="t" style="top:7px;left:6px"><span id="s111" style="font-weight:bold;letter-spacing:-0.060px;">decode</span></div></div>
<div class="port" style="left:193px;top:210px;background:#F57C00"></div><div class="port" style="left:240px;top:210px;background:#F57C00"></div><div class="port" style="left:357px;top:210px;background:#F57C00"></div><div class="port" style="left:176px;top:298px;background:#F57C00"></div><div class="port" style="left:416px;top:298px;background:#F57C00"></div><div class="port" style="left:538px;top:298px;background:#F57C00"></div><div class="port" style="left:600px;top:209px;background:#F57C00"></div><div class="port" style="left:600px;top:243px;background:#F57C00"></div><div class="port" style="left:676px;top:226px;background:#F57C00"></div><div class="port" style="left:720px;top:226px;background:#F57C00"></div><div class="port" style="left:766px;top:226px;background:#F57C00"></div><div class="port" style="left:832px;top:225px;background:#F57C00"></div><div class="port" style="left:832px;top:259px;background:#BDBDBD"></div><div class="port" style="left:1025px;top:242px;background:#2196F3"></div><div class="port" style="left:1072px;top:242px;background:#2196F3"></div><div class="port" style="left:1194px;top:242px;background:#F57C00"></div><div class="port" style="left:1170px;top:346px;background:#F57C00"></div><div class="port" style="left:1048px;top:346px;background:#F57C00"></div><div class="port" style="left:989px;top:346px;background:#F57C00"></div><div class="port" style="left:888px;top:346px;background:#F57C00"></div><div class="port" style="left:808px;top:346px;background:#F57C00"></div><div class="port" style="left:831px;top:466px;background:#F57C00"></div><div class="port" style="left:664px;top:466px;background:#F57C00"></div><div class="port" style="left:573px;top:466px;background:#F57C00"></div><div class="port" style="left:472px;top:466px;background:#E040FB"></div><div class="port" style="left:389px;top:466px;background:#E040FB"></div><div class="port" style="left:200px;top:466px;background:#E040FB"></div><div class="port" style="left:131px;top:466px;background:#E040FB"></div>
</div></div>
<!-- scrollbars -->
<div class="abs" style="left:1255px;top:66px;width:3px;height:477px;background:#fff"></div>
<div class="abs" style="left:1255px;top:66px;width:1px;height:476px;background:#FFF9FF"></div>
<div class="abs" style="left:1256px;top:66px;width:1px;height:477px;background:#d6d3ce"></div>
<div class="abs" style="left:1255px;top:66px;width:3px;height:221px;background:#466381"></div>
<div class="abs" style="left:1232px;top:541px;width:24px;height:1px;background:#FFF9FF"></div>
<div class="abs" style="left:1232px;top:542px;width:25px;height:1px;background:#d6d3ce"></div>
<div class="abs" style="left:1232px;top:543px;width:26px;height:1px;background:#fff"></div>
<div class="abs" style="left:0;top:541px;width:1232px;height:3px;background:#466381"></div>
<!-- pane handles -->
<svg class="abs" style="left:614px;top:545px" width="36" height="3" shape-rendering="crispEdges">
<rect x="0" y="0" width="2" height="2" fill="#fff"/><rect x="1" y="1" width="2" height="2" fill="#000"/><rect x="5" y="0" width="2" height="2" fill="#fff"/><rect x="6" y="1" width="2" height="2" fill="#000"/><rect x="10" y="0" width="2" height="2" fill="#fff"/><rect x="11" y="1" width="2" height="2" fill="#000"/><rect x="15" y="0" width="2" height="2" fill="#fff"/><rect x="16" y="1" width="2" height="2" fill="#000"/><rect x="20" y="0" width="2" height="2" fill="#fff"/><rect x="21" y="1" width="2" height="2" fill="#000"/><rect x="25" y="0" width="2" height="2" fill="#fff"/><rect x="26" y="1" width="2" height="2" fill="#000"/><rect x="30" y="0" width="2" height="2" fill="#fff"/><rect x="31" y="1" width="2" height="2" fill="#000"/>
</svg>
<svg class="abs" style="left:1260px;top:379px" width="3" height="36" shape-rendering="crispEdges">
<rect x="0" y="0" width="2" height="2" fill="#fff"/><rect x="1" y="1" width="2" height="2" fill="#000"/><rect x="0" y="5" width="2" height="2" fill="#fff"/><rect x="1" y="6" width="2" height="2" fill="#000"/><rect x="0" y="10" width="2" height="2" fill="#fff"/><rect x="1" y="11" width="2" height="2" fill="#000"/><rect x="0" y="15" width="2" height="2" fill="#fff"/><rect x="1" y="16" width="2" height="2" fill="#000"/><rect x="0" y="20" width="2" height="2" fill="#fff"/><rect x="1" y="21" width="2" height="2" fill="#000"/><rect x="0" y="25" width="2" height="2" fill="#fff"/><rect x="1" y="26" width="2" height="2" fill="#000"/><rect x="0" y="30" width="2" height="2" fill="#fff"/><rect x="1" y="31" width="2" height="2" fill="#000"/>
</svg>
<div id="console">
<div class="ln" style="top:-12px">1439882459.942 11111111111110010000000111000111001011001000000001111111101110110101101000100111111111100011011101111111010000011010000</div>
<div class="ln" style="top:5px">1439882460.190 111111111111100100000001110001110010110010000000011111111011101101011010001001111111111000110111011111110100000110100000</div>
<div class="ln" style="top:22px">1439882462.112 111111111111100100010001110001111100001000000000111110111101001001011010000010101100000000011011111110101101000111010000</div>
<div class="ln" style="top:39px">1439882462.377 111111111111100100000001110001111000001000000000011111111010010000111010001001111111111000011011111111000101000111000000</div>
<div class="ln" style="top:56px">1439882463.085 111111111111100100000001110001111000101100000000011111111011111111101011111001111111111000101011011110001100000110100000</div>
<div class="ln" style="top:73px">1439882473.044 111111111111100100000001110001110011011000000000111101111100101101000000000001001001000000011110011110001010000110110000</div>
<div class="ln" style="top:90px">1439882473.648 11111111111110010000000110000111000111000000000011011110011000011000110000010100100010000000001110000111000000010000000011000000</div>
<div class="ln" style="top:107px">1439882475.045 11111111111110010000000110000111101110100000000011000111110001111110001100000101100000000010011010011011000010010000000011000000</div>
<div class="ln" style="top:124px">1439882476.094 11111111111110010000000110000111001011001000000001111111101110110101101000100111111111100111001110011011000010010000000000000000</div>
<div class="ln" style="top:141px">1439882478.454 11111111111110010000000110000111100000100000000001111111101001000011101000100111111111100001111010011011000011100000000000000000</div>
<div class="ln" style="top:158px">1439882479.151 11111111111110010001000110000111100010110000000000000011011010010001101111000000000000000111100110011011000001100000000000000000</div>
<div class="abs" style="left:1255px;top:141px;width:3px;height:21px;background:#466381"></div>
</div>
</body></html>
